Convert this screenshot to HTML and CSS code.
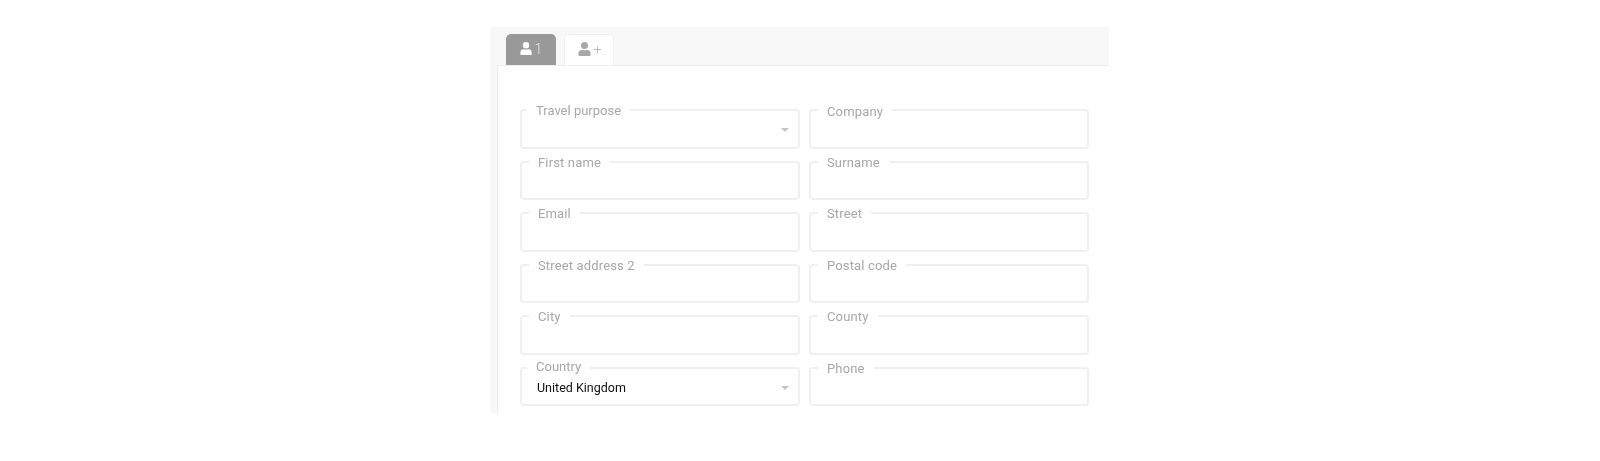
FILE: index.html
```html
<!DOCTYPE html>
<html lang="en">
<head>
<meta charset="utf-8">
<title>Traveller details</title>
<link rel="stylesheet" href="styles.css">
</head>
<body>
<main class="panel">
  <nav class="tabs">
    <a class="tab tab-active">
      <svg class="user" viewBox="0 0 448 512"><path d="M224 256a128 128 0 1 0 0-256 128 128 0 0 0 0 256zm90 32h-17a174 174 0 0 1-146 0h-17A134 134 0 0 0 0 422v42a48 48 0 0 0 48 48h352a48 48 0 0 0 48-48v-42a134 134 0 0 0-134-134z"/></svg>
      <span>1</span>
    </a>
    <a class="tab">
      <svg class="user" viewBox="0 0 448 512"><path d="M224 256a128 128 0 1 0 0-256 128 128 0 0 0 0 256zm90 32h-17a174 174 0 0 1-146 0h-17A134 134 0 0 0 0 422v42a48 48 0 0 0 48 48h352a48 48 0 0 0 48-48v-42a134 134 0 0 0-134-134z"/></svg>
      <span>+</span>
    </a>
  </nav>
  <section class="content">
    <form class="grid">
      <fieldset class="field field-select"><legend>Travel purpose</legend><span class="value"></span><i class="caret"></i></fieldset>
      <fieldset class="field field-low"><legend>Company</legend></fieldset>
      <fieldset class="field"><legend>First name</legend></fieldset>
      <fieldset class="field"><legend>Surname</legend></fieldset>
      <fieldset class="field"><legend>Email</legend></fieldset>
      <fieldset class="field"><legend>Street</legend></fieldset>
      <fieldset class="field"><legend>Street address 2</legend></fieldset>
      <fieldset class="field"><legend>Postal code</legend></fieldset>
      <fieldset class="field"><legend>City</legend></fieldset>
      <fieldset class="field"><legend>County</legend></fieldset>
      <fieldset class="field field-select field-high"><legend>Country</legend><span class="value">United Kingdom</span><i class="caret"></i></fieldset>
      <fieldset class="field field-mid"><legend>Phone</legend></fieldset>
    </form>
  </section>
</main>
</body>
</html>
```
FILE: styles.css
```css
* { box-sizing: border-box; }
html, body { margin: 0; background: #fff; }
body { font-family: Roboto, "Liberation Sans", sans-serif; height: 461px; overflow: hidden; }

.panel {
  width: 619px;
  height: 386px;
  margin: 27px 0 0 490px;
  background: #f8f8f8;
  overflow: hidden;
  display: flex;
  flex-direction: column;
  filter: blur(0.45px);
}

.tabs {
  display: flex;
  align-items: flex-end;
  gap: 8px;
  height: 38px;
  padding-left: 16px;
  flex: none;
}
.tab {
  display: flex;
  align-items: center;
  justify-content: center;
  gap: 3px;
  width: 50px;
  height: 31px;
  padding: 0 0 2px 1px;
  background: #fff;
  border: 1px solid #f0f0f0;
  border-bottom: 0;
  border-radius: 5px 5px 0 0;
  color: #b4b4b4;
  font-size: 14px;
  font-weight: 300;
}
.tab .user { width: 13px; height: 14px; fill: #a8a8a8; }
.tab-active {
  padding-left: 0;
  background: #999;
  border: 0;
  color: #e4e4e4;
  font-size: 14px;
}
.tab-active .user { width: 12px; height: 13px; fill: #fff; }

.content {
  flex: 1;
  margin-left: 7px;
  padding: 43px 20px 0 22px;
  background: #fff;
  border-top: 1px solid #eee;
  border-left: 1px solid #eee;
}

.grid {
  display: grid;
  grid-template-columns: 280px 280px;
  column-gap: 9px;
  grid-auto-rows: 39.5px;
  row-gap: 12px;
  margin: 0;
}

.field {
  position: relative;
  display: flex;
  align-items: center;
  min-width: 0;
  margin: 0;
  padding: 0;
  border: 2px solid #f0f0f0;
  border-radius: 4px;
}
.field legend {
  margin-left: 7px;
  padding: 0 9px;
  height: 2px;
  font-size: 13px;
  line-height: 3px;
  letter-spacing: 0.15px;
  color: #a8a8a8;
  font-weight: 400;
}
.field:nth-child(even) legend { margin-left: 7px; }
.field-select legend { margin-left: 5px; line-height: 3px; letter-spacing: 0; }
.field-low legend { line-height: 6px; }
.field-mid legend { line-height: 4px; }
.field-high legend { line-height: 0; }

.value {
  padding: 3px 0 0 15px;
  font-size: 12.5px;
  color: #111;
  line-height: 16px;
}
.caret {
  position: absolute;
  right: 9px;
  top: 17px;
  width: 0;
  height: 0;
  border-left: 4px solid transparent;
  border-right: 4px solid transparent;
  border-top: 4px solid #c4c4c4;
}
```
